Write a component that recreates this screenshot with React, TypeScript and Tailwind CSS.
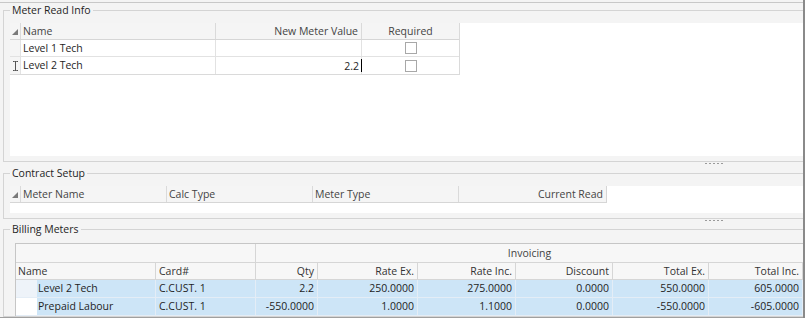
import type { ReactNode } from 'react'

const line = 'border-[#d4d4d4]'

function GroupBox({ title, children, bodyClass }: { title: string; children: ReactNode; bodyClass: string }) {
  return (
    <div className="flex flex-col">
      <div className="flex h-[15px]">
        <div className={`w-[7px] h-[8px] self-end border-l border-t ${line}`} />
        <span className="px-[2px] leading-[15px] text-[#1e1e1e]">{title}</span>
        <div className={`flex-1 h-[8px] self-end border-t ${line}`} />
      </div>
      <div className={`border-l border-b ${line} ${bodyClass}`}>{children}</div>
    </div>
  )
}

function Splitter() {
  return (
    <div className="h-[4px] flex items-start justify-end pr-[80px]">
      <div className="flex gap-[2px] mt-[1px]">
        {[0, 1, 2, 3, 4].map((i) => (
          <div key={i} className="w-[2px] h-[1px] bg-[#9a9a9a]" />
        ))}
      </div>
    </div>
  )
}

function SortGlyph() {
  return (
    <svg width="6" height="6" viewBox="0 0 6 6" className="mt-[2px]">
      <polygon points="6,0 6,6 0,6" fill="#7a7a7a" />
    </svg>
  )
}

function IBeam() {
  return (
    <svg width="5" height="10" viewBox="0 0 5 10">
      <path d="M0 0.5h1.5M3.5 0.5H5M2.5 1v8M0 9.5h1.5M3.5 9.5H5M1.5 0.5h2M1.5 9.5h2" stroke="#555" strokeWidth="1" fill="none" />
    </svg>
  )
}

function Check() {
  return <div className="w-[12px] h-[12px] border border-[#a8a8a8] bg-white" />
}

const billCols = [
  { label: 'Qty', w: 'w-[62px]' },
  { label: 'Rate Ex.', w: 'w-[100px]' },
  { label: 'Rate Inc.', w: 'w-[98px]' },
  { label: 'Discount', w: 'w-[97px]' },
  { label: 'Total Ex.', w: 'w-[96px]' },
  { label: 'Total Inc.', w: 'flex-1' },
]

const billRows = [
  { name: 'Level 2 Tech', card: 'C.CUST. 1', vals: ['2.2', '250.0000', '275.0000', '0.0000', '550.0000', '605.0000'], ind: 'bg-[#eef3f9]' },
  { name: 'Prepaid Labour', card: 'C.CUST. 1', vals: ['-550.0000', '1.0000', '1.1000', '0.0000', '-550.0000', '-605.0000'], ind: 'bg-white' },
]

export default function App() {
  return (
    <div className="w-[805px] h-[318px] bg-[#f4f4f4] flex overflow-hidden font-['Open_Sans',sans-serif] text-[10.5px] text-[#1e1e1e]">
      <div className="flex-1 flex flex-col">
        <div className="h-[316px] flex flex-col border-t border-[#c8c8c8] mt-[2px] pl-[3px] overflow-hidden">
          {/* Meter Read Info */}
          <GroupBox title="Meter Read Info" bodyClass="pl-[6px] pt-[5px] pb-[5px]">
            <div className="h-[133px] bg-white">
              <div className="w-[450px] border-r border-b border-[#dadada]">
                <div className="flex h-[17px] bg-[#f5f5f5] border-b border-[#d6d6d6] text-[#444]">
                  <div className="w-[11px] border-r border-[#dadada] flex items-center justify-center"><SortGlyph /></div>
                  <div className="w-[195px] border-r border-[#dadada] pl-[2px] leading-[16px]">Name</div>
                  <div className="w-[146px] border-r border-[#dadada] pr-[3px] text-right leading-[16px]">New Meter Value</div>
                  <div className="flex-1 text-center leading-[16px]">Required</div>
                </div>
                <div className="flex h-[17px] border-b border-[#e2e2e2]">
                  <div className="w-[11px] border-r border-[#e2e2e2] bg-[#f5f5f5]" />
                  <div className="w-[195px] border-r border-[#e2e2e2] pl-[2px] leading-[16px]">Level 1 Tech</div>
                  <div className="w-[146px] border-r border-[#e2e2e2]" />
                  <div className="flex-1 flex items-center justify-center"><Check /></div>
                </div>
                <div className="flex h-[17px]">
                  <div className="w-[11px] border-r border-[#e2e2e2] bg-[#f5f5f5] flex items-center justify-center"><IBeam /></div>
                  <div className="w-[195px] border-r border-[#e2e2e2] pl-[2px] leading-[16px]">Level 2 Tech</div>
                  <div className="w-[146px] border-r border-[#e2e2e2] flex items-center justify-end">
                    <span className="leading-[16px]">2.2</span>
                    <span className="w-px h-[13px] bg-black ml-[2px] -mr-[1px]" />
                  </div>
                  <div className="flex-1 flex items-center justify-center"><Check /></div>
                </div>
              </div>
            </div>
          </GroupBox>

          <Splitter />

          {/* Contract Setup */}
          <GroupBox title="Contract Setup" bodyClass="pl-[6px] pt-[5px] pb-[5px]">
            <div className="h-[27px] bg-white">
              <div className="flex h-[17px] w-[597px] bg-[#f5f5f5] border-b border-r border-[#d6d6d6] text-[#444]">
                <div className="w-[11px] border-r border-[#dadada] flex items-center justify-center"><SortGlyph /></div>
                <div className="w-[146px] border-r border-[#dadada] pl-[2px] leading-[16px]">Meter Name</div>
                <div className="w-[146px] border-r border-[#dadada] pl-[2px] leading-[16px]">Calc Type</div>
                <div className="w-[146px] border-r border-[#dadada] pl-[2px] leading-[16px]">Meter Type</div>
                <div className="flex-1 pr-[3px] text-right leading-[16px]">Current Read</div>
              </div>
            </div>
          </GroupBox>

          <Splitter />

          {/* Billing Meters */}
          <GroupBox title="Billing Meters" bodyClass="pl-[11px] pt-[6px] flex-1">
            <div className="border-l border-t border-[#c6c6c6]">
              <div className="flex h-[19px] bg-[#f7f7f7] border-b border-[#d6d6d6]">
                <div className="w-[240px] border-r border-[#d6d6d6]" />
                <div className="flex-1 text-center leading-[18px] text-[#444]">Invoicing</div>
              </div>
              <div className="flex h-[17px] bg-[#f7f7f7] border-b border-[#d6d6d6] text-[#333]">
                <div className="w-[140px] border-r border-[#d6d6d6] pl-[2px] leading-[16px]">Name</div>
                <div className="w-[100px] border-r border-[#d6d6d6] pl-[3px] leading-[16px]">Card#</div>
                {billCols.map((c) => (
                  <div key={c.label} className={`${c.w} border-r border-[#d6d6d6] pr-[3px] text-right leading-[16px]`}>{c.label}</div>
                ))}
              </div>
              {billRows.map((r) => (
                <div key={r.name} className="flex h-[18px] border-b border-[#e4edf6]">
                  <div className="w-[140px] flex border-r border-[#e4edf6]">
                    <div className={`w-[21px] ${r.ind}`} />
                    <div className="flex-1 bg-[#cde5f7] pl-[1px] leading-[17px]">{r.name}</div>
                  </div>
                  <div className="w-[100px] bg-[#cde5f7] border-r border-[#e4edf6] pl-[3px] leading-[17px]">{r.card}</div>
                  {r.vals.map((v, i) => (
                    <div key={i} className={`${billCols[i].w} bg-[#cde5f7] border-r border-[#e4edf6] pr-[3px] text-right leading-[17px]`}>{v}</div>
                  ))}
                </div>
              ))}
            </div>
          </GroupBox>
        </div>
        <div className="h-[1px] bg-[#a0a0a0]" />
      </div>
      <div className="w-[2px] bg-[#8a8a8a]" />
    </div>
  )
}
